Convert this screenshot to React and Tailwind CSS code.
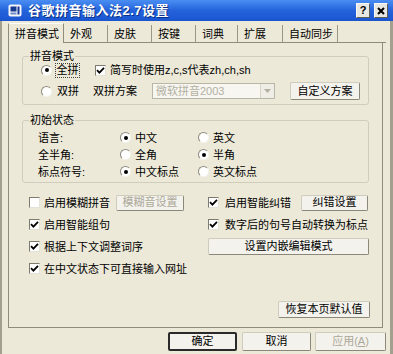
import React from "react"

const FONT = "font-['Liberation_Sans','Noto_Sans_CJK_SC',sans-serif]"

const Radio = ({ checked }) => (
  <span className="w-[11px] h-[11px] shrink-0 rounded-full border border-[#8d8b7f] border-b-[#f4f3ee] border-r-[#f4f3ee] bg-white flex items-center justify-center">
    {checked && <span className="w-[4px] h-[4px] rounded-full bg-black" />}
  </span>
)

const Check = ({ checked }) => (
  <span className="w-[11px] h-[11px] shrink-0 border border-[#7d7b70] border-b-[#e4e2d6] border-r-[#e4e2d6] bg-white flex items-center justify-center">
    {checked && (
      <svg width="9" height="9" viewBox="0 0 9 9">
        <path d="M1 4.2 L3.4 6.6 L8 1.8" fill="none" stroke="#000" strokeWidth="1.8" />
      </svg>
    )}
  </span>
)

const Btn = ({ children, className = "", disabled }) => (
  <button
    className={`flex items-center justify-center rounded-[2px] border border-[#cfccbd] border-b-[#8b887a] border-r-[#8b887a] bg-[#f3f2ec] text-[11px] leading-none ${
      disabled ? "text-[#aca899]" : "text-black"
    } ${className}`}
  >
    {children}
  </button>
)

const tabs = [
  { label: "拼音模式", w: "w-[56px]", active: true },
  { label: "外观", w: "w-[44px]" },
  { label: "皮肤", w: "w-[44px]" },
  { label: "按键", w: "w-[44px]" },
  { label: "词典", w: "w-[42px]" },
  { label: "扩展", w: "w-[45px]" },
  { label: "自动同步", w: "w-[55px]" },
]

const StateRow = ({ label, a, b, first }) => (
  <div className="grid grid-cols-[82px_78px_auto] h-[17px] items-center">
    <span>{label}</span>
    <span className="flex items-center">
      <Radio checked={first} />
      <span className="ml-[4px]">{a}</span>
    </span>
    <span className="flex items-center">
      <Radio checked={!first} />
      <span className="ml-[4px]">{b}</span>
    </span>
  </div>
)

export default function App() {
  return (
    <div className={`w-[393px] h-[354px] overflow-hidden bg-[#ece9d8] flex flex-col text-[11px] leading-[12px] text-black ${FONT}`}>
      {/* title bar */}
      <div className="h-[21px] shrink-0 flex items-center pl-[8px] pr-[5px] bg-gradient-to-b from-[#4a8ef2] via-[#2463dc] to-[#1a55cf]">
        <svg width="14" height="13" viewBox="0 0 14 13">
          <rect x="0.5" y="0.5" width="13" height="12" rx="2" fill="#f4f6fb" />
          <rect x="2.5" y="2.5" width="6" height="5" fill="#16398f" />
          <rect x="9.5" y="2.5" width="2" height="8" fill="#16398f" />
          <rect x="2.5" y="8.5" width="6" height="2" fill="#6f8cc9" />
        </svg>
        <span className="ml-[6px] text-[13px] leading-none font-bold text-white tracking-[0.5px] [text-shadow:1px_1px_0_#0b2f86]">
          谷歌拼音输入法2.7设置
        </span>
        <div className="ml-auto flex gap-[4px]">
          <span className="w-[14px] h-[15px] flex items-center justify-center bg-[#e8e7e1] border border-[#f8f8f4] border-b-[#5e5d58] border-r-[#5e5d58] text-[11px] font-bold leading-none">
            ?
          </span>
          <span className="w-[14px] h-[15px] flex items-center justify-center bg-[#e8e7e1] border border-[#f8f8f4] border-b-[#5e5d58] border-r-[#5e5d58]">
            <svg width="8" height="8" viewBox="0 0 8 8">
              <path d="M1 1 L7 7 M7 1 L1 7" stroke="#000" strokeWidth="2" />
            </svg>
          </span>
        </div>
      </div>

      {/* body */}
      <div className="flex-1 flex flex-col border-l-[2px] border-r-[3px] border-[#a3a090] pl-[6px] pr-[4px]">
        {/* tabs */}
        <div className="mt-[3px] h-[19px] flex items-end -mb-px relative z-10">
          {tabs.map((t) => (
            <div
              key={t.label}
              className={`${t.w} flex items-center pl-[6px] ${
                t.active
                  ? "h-[20px] border border-b-0 border-[#8f8c7e] border-t-[#fdfdf8] bg-[#ece9d8]"
                  : "h-[18px] border-r border-[#9a978a] border-b border-b-[#8f8c7e]"
              }`}
            >
              {t.label}
            </div>
          ))}
          <div className="flex-1 h-px bg-[#8f8c7e]" />
        </div>

        {/* panel */}
        <div className="w-[375px] h-[286px] border border-[#8f8c7e] flex flex-col">
          <fieldset className="mt-[7px] ml-[13px] w-[347px] border border-[#d0cdbd] rounded-[3px] pb-[4px]">
            <legend className="ml-[6px] px-[1px]">拼音模式</legend>
            <div className="h-[16px] flex items-center pl-[18px]">
              <Radio checked />
              <span className="ml-[3px] w-[25px] h-[15px] border border-dotted border-[#444] flex items-center justify-center">
                全拼
              </span>
              <span className="ml-[15px]">
                <Check checked />
              </span>
              <span className="ml-[4px]">简写时使用z,c,s代表zh,ch,sh</span>
            </div>
            <div className="mt-[4px] h-[18px] flex items-center pl-[18px]">
              <Radio />
              <span className="ml-[5px]">双拼</span>
              <span className="ml-[14px]">双拼方案</span>
              <div className="ml-[15px] w-[123px] h-[16px] border border-[#b9b6a6] bg-[#f7f6f1] flex items-center">
                <span className="flex-1 pl-[3px] text-[#b3b0a2]">微软拼音2003</span>
                <span className="w-[14px] h-[14px] border-l border-[#d8d5c8] bg-[#eeede6] flex items-center justify-center">
                  <svg width="7" height="4" viewBox="0 0 7 4">
                    <path d="M0 0 H7 L3.5 4 Z" fill="#b3b0a2" />
                  </svg>
                </span>
              </div>
              <Btn className="ml-[15px] w-[70px] h-[18px]">自定义方案</Btn>
            </div>
          </fieldset>

          <fieldset className="mt-[9px] ml-[13px] w-[347px] border border-[#d0cdbd] rounded-[3px] pt-[3px] pb-[2px]">
            <legend className="ml-[6px] px-[1px]">初始状态</legend>
            <div className="pl-[15px]">
              <StateRow label="语言:" a="中文" b="英文" first />
              <StateRow label="全半角:" a="全角" b="半角" />
              <StateRow label="标点符号:" a="中文标点" b="英文标点" first />
            </div>
          </fieldset>

          <div className="mt-[11px] ml-[20px] grid grid-cols-[179px_161px] grid-rows-[17px_17px_17px_17px] gap-y-[5px] items-center">
            <div className="flex items-center">
              <Check />
              <span className="ml-[4px] w-[66px]">启用模糊拼音</span>
              <Btn disabled className="ml-[6px] w-[68px] h-[16px]">模糊音设置</Btn>
            </div>
            <div className="flex items-center">
              <Check checked />
              <span className="ml-[6px] w-[66px]">启用智能纠错</span>
              <Btn className="ml-[10px] w-[67px] h-[16px]">纠错设置</Btn>
            </div>
            <div className="flex items-center">
              <Check checked />
              <span className="ml-[4px]">启用智能组句</span>
            </div>
            <div className="flex items-center">
              <Check checked />
              <span className="ml-[6px]">数字后的句号自动转换为标点</span>
            </div>
            <div className="flex items-center">
              <Check checked />
              <span className="ml-[4px]">根据上下文调整词序</span>
            </div>
            <Btn className="w-[161px] h-[17px]">设置内嵌编辑模式</Btn>
            <div className="flex items-center">
              <Check checked />
              <span className="ml-[4px]">在中文状态下可直接输入网址</span>
            </div>
          </div>

          <Btn className="mt-auto mb-[9px] mr-[12px] self-end w-[92px] h-[17px]">恢复本页默认值</Btn>
        </div>

        {/* dialog buttons */}
        <div className="mt-[4px] flex justify-end">
          <button className="w-[69px] h-[19px] rounded-[2px] border-2 border-[#2a2a2a] bg-[#f3f2ec] text-[11px] leading-none">
            确定
          </button>
          <Btn className="ml-[5px] w-[69px] h-[19px]">取消</Btn>
          <Btn disabled className="ml-[4px] w-[71px] h-[19px]">
            应用(<span className="underline">A</span>)
          </Btn>
        </div>
      </div>
    </div>
  )
}
